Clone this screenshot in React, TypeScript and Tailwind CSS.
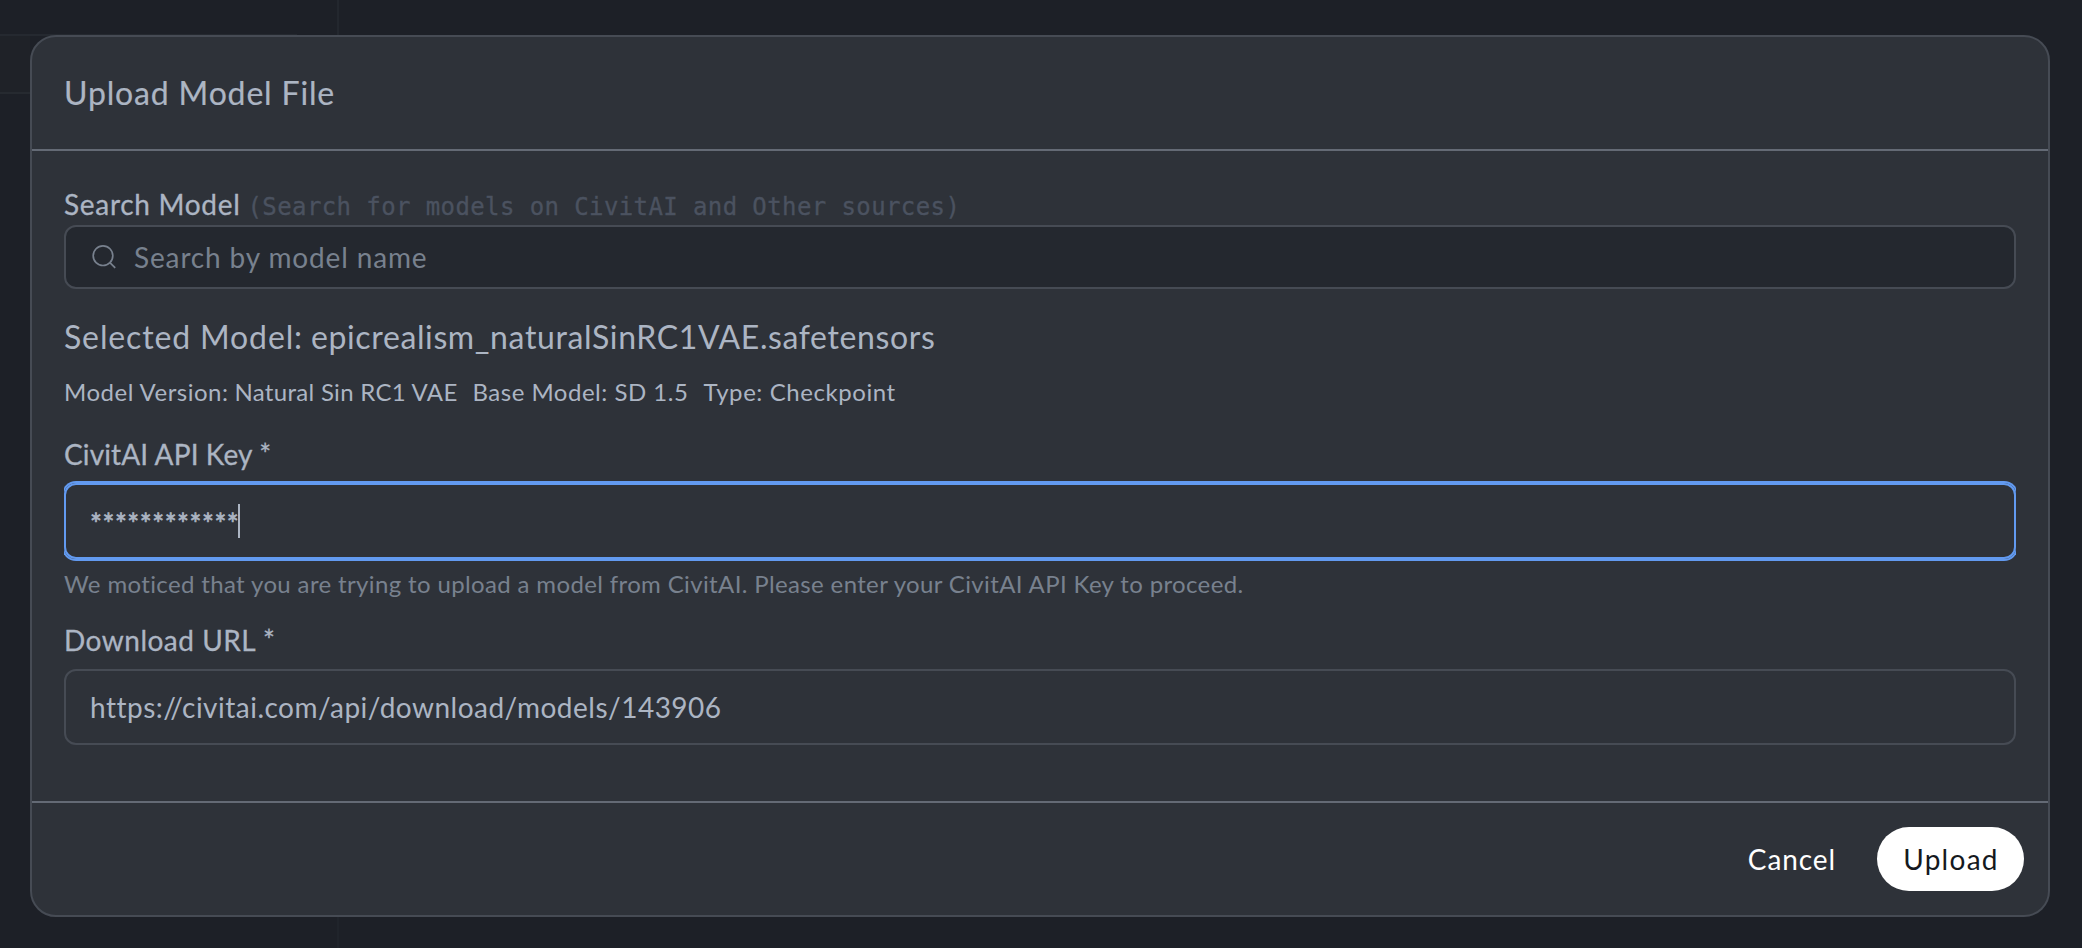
import React from "react";

function Backdrop() {
  return (
    <div className="absolute inset-0 bg-[#1d2027]">
      <div className="absolute left-[337px] top-0 h-[35px] w-[2px] bg-[#23272e]" />
      <div className="absolute left-[337px] top-[917px] h-[31px] w-[2px] bg-[#20242b]" />
      <div className="absolute left-0 top-[34px] h-[2px] w-[297px] bg-[#252930]" />
      <div className="absolute left-0 top-[36px] h-[56px] w-[30px] bg-[#1f2228]" />
      <div className="absolute left-0 top-[92px] h-[2px] w-[30px] bg-[#262a30]" />
    </div>
  );
}

function SearchIcon() {
  return (
    <svg viewBox="0 0 24 24" className="h-6 w-6 shrink-0" fill="none" stroke="#78818e" strokeWidth="1.7">
      <circle cx="11" cy="10.7" r="9.8" />
      <path d="M17.9 17.6 23.2 22.9" />
    </svg>
  );
}

export default function App() {
  return (
    <div className="relative h-[948px] w-[2082px] overflow-hidden font-['Lato',sans-serif] text-[#acb5c3]">
      <Backdrop />
      <div className="relative pl-[30px] pt-[35px]">
        <div className="h-[882px] w-[2020px] rounded-[26px] border-2 border-[#464b54] bg-[#2e3239]">
          <header className="flex h-[114px] items-center border-b-2 border-[#646a75] pl-8 text-[32px] leading-none tracking-[0.84px] [-webkit-text-stroke:0.2px]">
            Upload Model File
          </header>

          <main className="flex h-[650px] flex-col px-8 pt-8">
            <div className="flex h-[42px] items-center whitespace-nowrap">
              <label className="w-[183.5px] text-[28px] leading-none tracking-[0.7px] [-webkit-text-stroke:0.3px]">
                Search Model
              </label>
              <span className="pt-[5px] font-['DejaVu_Sans_Mono',monospace] text-[24px] leading-none tracking-[0.4px] text-[#4b5260] [-webkit-text-stroke:0.3px]">
                (Search for models on CivitAI and Other sources)
              </span>
            </div>
            <div className="flex h-16 shrink-0 items-center rounded-xl border-2 border-[#464b54] bg-[#24282f] pl-[26px]">
              <SearchIcon />
              <span className="pl-[18px] text-[28px] leading-none tracking-[0.86px] text-[#78818e]">
                Search by model name
              </span>
            </div>

            <h3 className="mt-6 flex h-[46px] items-center whitespace-nowrap pt-[1px] text-[32px] leading-none">
              <span className="w-[247px] tracking-[0.86px]">Selected Model:</span>
              <span className="tracking-[0.62px]">epicrealism_naturalSinRC1VAE.safetensors</span>
            </h3>
            <div className="mt-[17px] flex h-8 items-center whitespace-nowrap text-[24px] leading-none">
              <span className="w-[170.5px] tracking-[0.5px]">Model Version:</span>
              <span className="w-[238px] tracking-[0.3px]">Natural Sin RC1 VAE</span>
              <span className="w-[231px] tracking-[0.5px]">Base Model: SD 1.5</span>
              <span className="tracking-[0.57px]">Type: Checkpoint</span>
            </div>

            <label className="mt-6 flex h-[44px] items-center text-[28px] leading-none tracking-[0.12px] [-webkit-text-stroke:0.3px]">
              CivitAI API Key *
            </label>
            <div className="mt-[5px] shrink-0 overflow-hidden py-[2px]">
              <div className="flex h-[76px] items-center rounded-xl border-2 border-[#629af0] pl-6 ring-2 ring-[#629af0]">
                <span className="w-[149px] pt-[5px] text-[28px] leading-none tracking-[0.54px] [-webkit-text-stroke:0.7px]">
                  ************
                </span>
                <span className="-ml-[1px] h-[34px] w-[2px] bg-[#acb5c3]" />
              </div>
            </div>
            <p className="mt-[7px] flex h-8 items-center whitespace-nowrap text-[24px] leading-none tracking-[0.36px] text-[#78818e]">
              We moticed that you are trying to upload a model from CivitAI. Please enter your CivitAI API Key to
              proceed.
            </p>

            <label className="mt-[18px] flex h-[44px] items-center text-[28px] leading-none tracking-[0.5px] [-webkit-text-stroke:0.3px]">
              Download URL *
            </label>
            <div className="mt-[7px] flex h-[76px] shrink-0 items-center rounded-xl border-2 border-[#464b54] pl-6 text-[28px] leading-none tracking-[0.49px]">
              https://civitai.com/api/download/models/143906
            </div>
          </main>

          <footer className="flex h-[114px] items-center justify-end border-t-2 border-[#646a75] pr-6 text-[28px] leading-none">
            <button className="mr-[41px] tracking-[0.9px] text-white">Cancel</button>
            <button className="h-16 w-[147px] rounded-full bg-white pl-[1px] tracking-[1.28px] text-[#15191e]">
              Upload
            </button>
          </footer>
        </div>
      </div>
    </div>
  );
}
